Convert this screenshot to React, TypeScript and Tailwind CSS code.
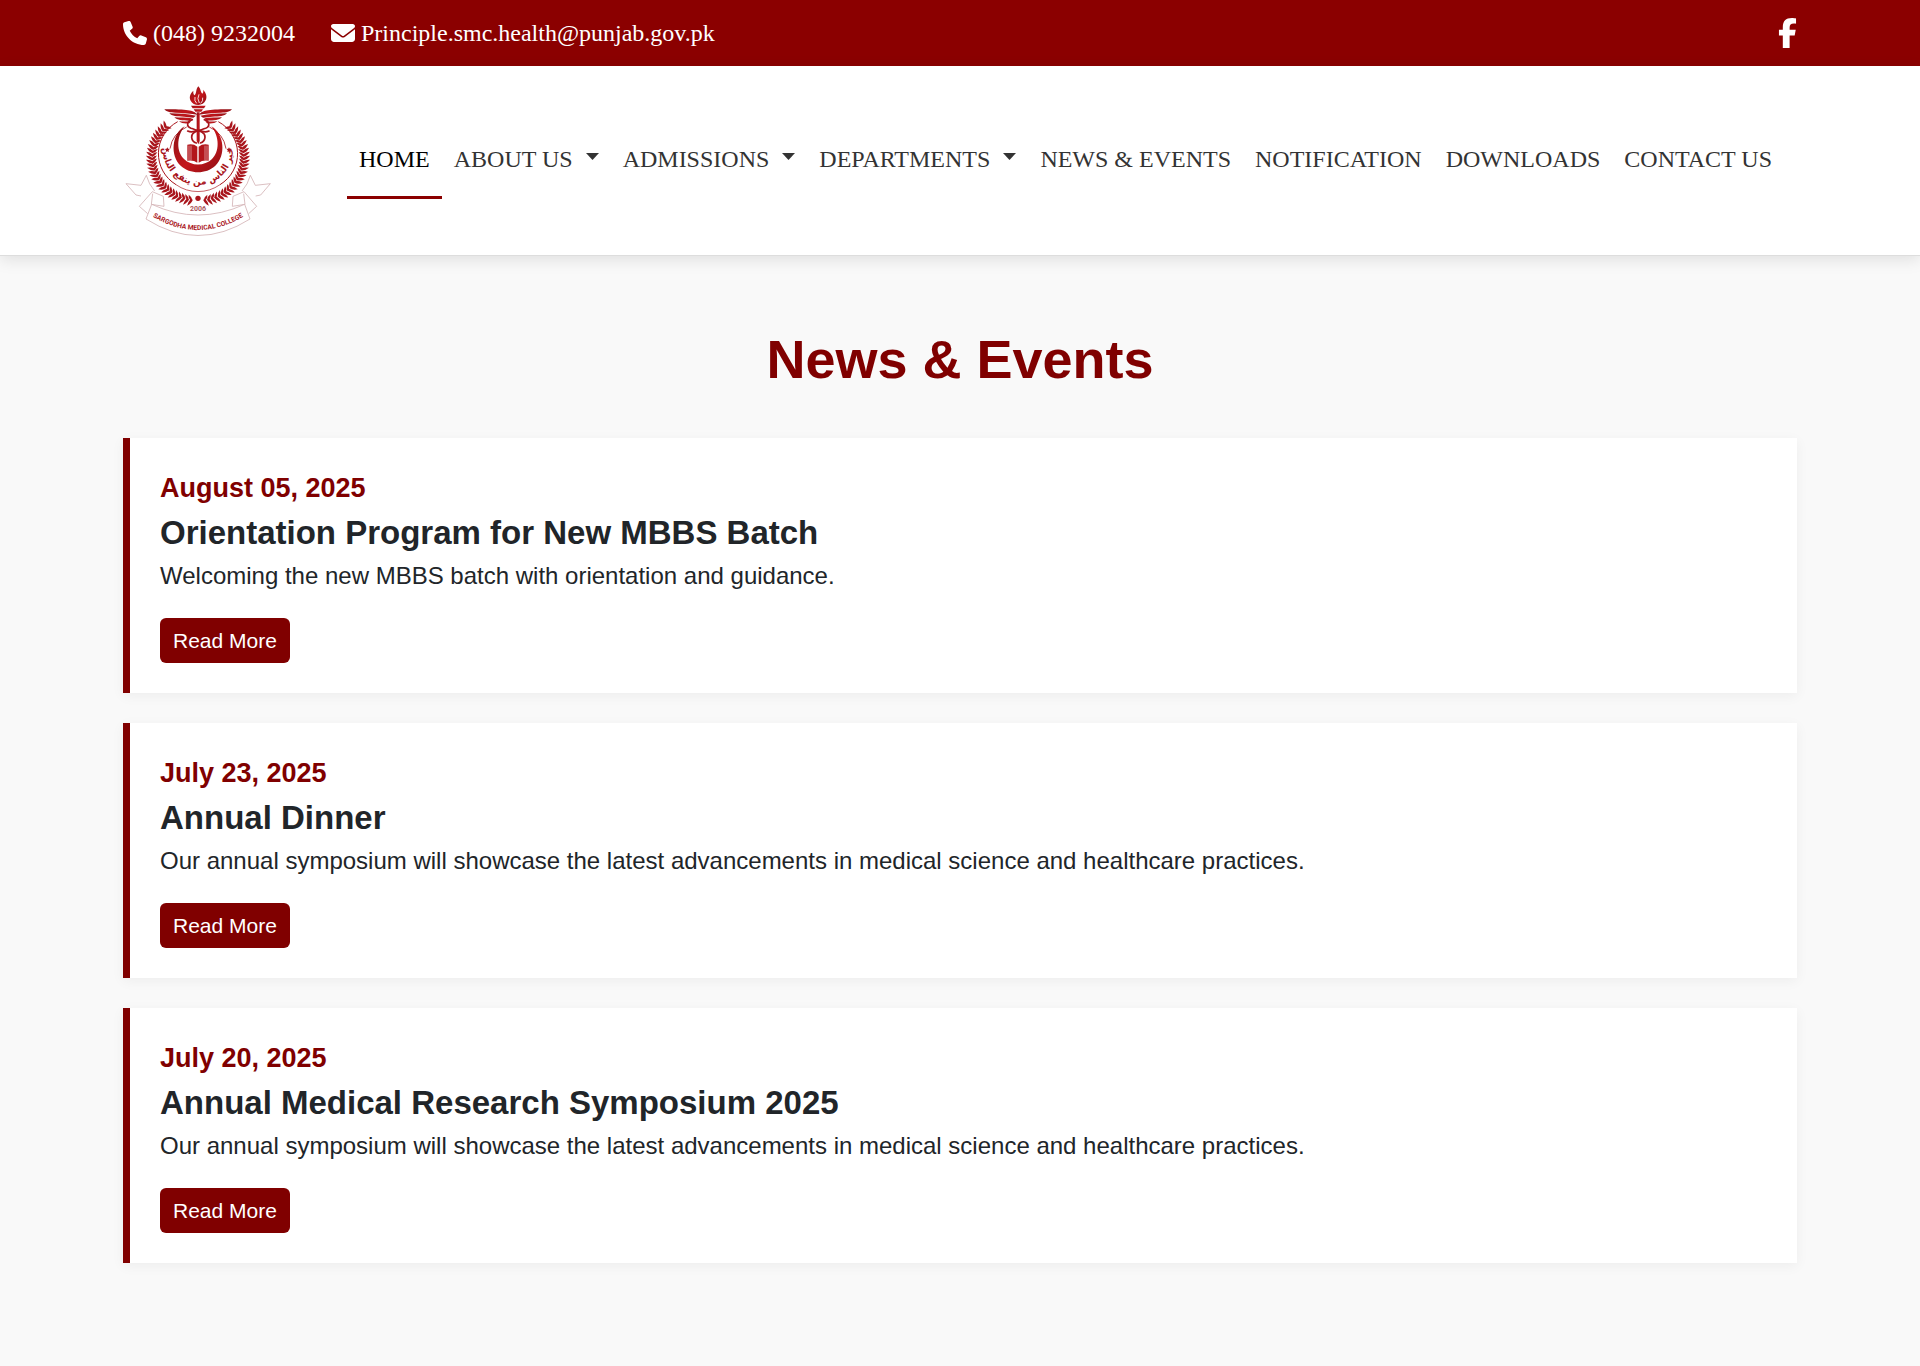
import { FaPhone, FaEnvelope, FaFacebookF } from "react-icons/fa6";

type NavItem = { label: string; active?: boolean; menu?: boolean };

const navItems: NavItem[] = [
  { label: "HOME", active: true },
  { label: "ABOUT US", menu: true },
  { label: "ADMISSIONS", menu: true },
  { label: "DEPARTMENTS", menu: true },
  { label: "NEWS & EVENTS" },
  { label: "NOTIFICATION" },
  { label: "DOWNLOADS" },
  { label: "CONTACT US" },
];

const news = [
  {
    date: "August 05, 2025",
    title: "Orientation Program for New MBBS Batch",
    text: "Welcoming the new MBBS batch with orientation and guidance.",
  },
  {
    date: "July 23, 2025",
    title: "Annual Dinner",
    text: "Our annual symposium will showcase the latest advancements in medical science and healthcare practices.",
  },
  {
    date: "July 20, 2025",
    title: "Annual Medical Research Symposium 2025",
    text: "Our annual symposium will showcase the latest advancements in medical science and healthcare practices.",
  },
];

/* Pairs of laurel leaves along a circular stem, from bottom to top. */
const leafAngles = Array.from({ length: 28 }, (_, i) => 98 + i * 4.7);

function LaurelHalf() {
  return (
    <g>
      {leafAngles.map((deg) => {
        const a = (deg * Math.PI) / 180;
        const x = 264 + 137 * Math.cos(a);
        const y = 262 + 128 * Math.sin(a);
        return (
          <g key={deg} transform={`translate(${x} ${y}) rotate(${deg})`}>
            <path d="M-1 -3 Q10 -2 19 11 Q8 11 -1 4Z" />
            <path d="M1 -3 Q-8 -1 -14 11 Q-5 11 1 4Z" />
          </g>
        );
      })}
    </g>
  );
}

function Wing() {
  return (
    <g>
      <path d="M262 133 C250 119 232 117 163 117 C168 124 180 127 196 127 C222 127 244 130 262 133Z" />
      <path d="M178 129 C186 137 200 139 222 139 L250 142 L258 136 C232 130 208 130 178 129Z" />
      <path d="M193 141 C202 150 216 151 238 151 L246 144 C226 142 210 142 193 141Z" />
      <path d="M207 153 C215 160 226 160 238 159 L243 153 C230 154 218 154 207 153Z" />
    </g>
  );
}

function CollegeLogo() {
  return (
    <svg
      viewBox="39 26 450 489"
      className="h-[163px] w-[150px] shrink-0"
      role="img"
      aria-label="Sargodha Medical College"
    >
      <defs>
        <linearGradient id="crimson" x1="0" y1="0" x2="1" y2="1">
          <stop offset="0" stopColor="#8c1015" />
          <stop offset="0.55" stopColor="#c4161c" />
          <stop offset="1" stopColor="#8c1015" />
        </linearGradient>
        <path id="mottoArc" d="M162 215 A105 104 0 1 0 366 215" />
        <path id="nameArc" d="M118 433 Q264 525 410 433" />
      </defs>

      <g fill="#a9151c">
        <LaurelHalf />
        <g transform="matrix(-1 0 0 1 528 0)">
          <LaurelHalf />
        </g>
        <circle cx="264" cy="384" r="8" />
      </g>

      <g fill="none" stroke="#a9151c" strokeWidth="3">
        <path d="M203 154 A113 110 0 0 0 198 343" />
        <path d="M325 154 A113 110 0 0 1 330 343" />
        <path d="M198 343 A113 110 0 0 0 330 343" strokeWidth="2" />
        <path d="M230 170 A88 86 0 0 0 180 235" strokeWidth="2.5" />
        <path d="M298 170 A88 86 0 0 1 348 235" strokeWidth="2.5" />
      </g>

      <path
        d="M224 168 C184 190 180 258 212 286 C240 312 288 312 316 286 C348 258 344 190 304 168 C330 200 328 246 306 266 C284 288 244 288 222 266 C200 246 198 200 224 168Z"
        fill="url(#crimson)"
      />

      <g fill="#b3161c">
        <path d="M232 223 Q250 219 262 229 V277 Q250 268 232 271Z" />
        <path d="M296 223 Q278 219 266 229 V277 Q278 268 296 271Z" />
      </g>
      <path
        d="M237 226 V270 M243 226 V270 M291 226 V270 M285 226 V270"
        stroke="#fff"
        strokeWidth="1.5"
      />

      <g fill="url(#crimson)">
        <path d="M265 48 C274 58 271 66 277 70 C281 66 280 61 279 58 C289 68 292 80 287 90 C283 99 275 104 265 104 C255 104 246 99 242 91 C236 79 242 68 250 61 C249 68 251 73 254 75 C261 68 256 58 265 48Z" />
        <path d="M243 106 H287 L282 114 H248Z" />
        <path d="M251 117 H279 L274 124 H256Z" />
        <path d="M260 126 H269 V212 L265 222 L260 212Z" />
        <Wing />
        <g transform="matrix(-1 0 0 1 529 0)">
          <Wing />
        </g>
      </g>
      <path
        d="M255 80 Q252 92 260 99 M267 72 Q260 84 268 98 M278 82 Q280 92 272 99"
        fill="none"
        stroke="#fff"
        strokeWidth="2.5"
      />

      <g fill="none" stroke="#a9151c" strokeWidth="5" strokeLinecap="round">
        <path d="M247 148 C230 153 228 168 243 174 C262 181 286 183 285 201 C284 211 277 216 271 218" />
        <path d="M283 148 C299 153 301 168 287 174 C268 181 244 183 245 201 C246 211 252 216 259 218" />
        <path d="M233 182 Q246 188 262 180" />
        <path d="M297 182 Q284 188 268 180" />
      </g>

      <g fill="#a9151c">
        <path d="M172 231 l2.400 4.500 5 .7 -3.600 3.500 .9 5 -4.700 -2.300 -4.700 2.300 .9 -5 -3.600 -3.500 5 -.7z" />
        <path d="M357 231 l2.400 4.500 5 .7 -3.600 3.500 .9 5 -4.700 -2.300 -4.700 2.300 .9 -5 -3.600 -3.500 5 -.7z" />
      </g>

      <text
        fill="#a9151c"
        fontSize="27"
        fontWeight="700"
        textAnchor="middle"
        className="font-['DejaVu_Sans',sans-serif]"
      >
        <textPath href="#mottoArc" startOffset="50%">
          خير الناس من ينفع الناس
        </textPath>
      </text>

      <g fill="#fff" stroke="#c9a0a3" strokeWidth="2" strokeLinejoin="round">
        <path
          d="M109 315 L93 345 L48 340 L78 374 L93 377 M109 315 Q116 342 134 362"
          fill="none"
        />
        <path
          d="M421 315 L436 345 L481 340 L452 374 L437 377 M421 315 Q414 342 396 362"
          fill="none"
        />
        <path d="M88 408 L127 364 L160 378 L162 408 L124 402 L128 370 M88 408 L113 430" fill="none" />
        <path d="M440 408 L402 364 L369 378 L367 408 L405 402 L401 370 M440 408 L416 430" fill="none" />
        <path d="M125 402 Q264 466 404 402 L420 446 Q264 545 108 446Z" />
      </g>

      <text
        x="264"
        y="423"
        fontSize="21"
        fontWeight="700"
        textAnchor="middle"
        fill="#a9555a"
        className="font-['Roboto',sans-serif]"
      >
        2006
      </text>
      <text
        fill="#a9151c"
        fontSize="20"
        fontWeight="700"
        textAnchor="middle"
        className="font-['Roboto',sans-serif]"
      >
        <textPath href="#nameArc" startOffset="50%">
          SARGODHA MEDICAL COLLEGE
        </textPath>
      </text>
    </svg>
  );
}

function Caret() {
  return (
    <svg viewBox="0 0 13 7" className="mb-1 ml-[13px] h-[7px] w-[13px]" fill="currentColor" aria-hidden="true">
      <path d="M0 0H13L6.500 7Z" />
    </svg>
  );
}

export default function App() {
  return (
    <div className="min-h-screen bg-[#f9f9f9] font-['Liberation_Sans',Arial,sans-serif] text-[#212529]">
      <div className="flex h-[66px] items-center bg-[#8b0000] px-[123px] font-['Liberation_Serif',serif] text-2xl text-white">
        <a href="tel:0489232004" className="flex items-center gap-1.5">
          <FaPhone className="size-6" />
          (048) 9232004
        </a>
        <a
          href="mailto:Principle.smc.health@punjab.gov.pk"
          className="ml-9 flex items-center gap-1.5"
        >
          <FaEnvelope className="size-6" />
          Principle.smc.health@punjab.gov.pk
        </a>
        <a href="#facebook" aria-label="Facebook" className="ml-auto">
          <FaFacebookF className="h-[30px] w-[19px]" />
        </a>
      </div>

      <header className="relative flex items-center justify-between border-b border-[#dddddd] bg-white py-[13px] pr-[136px] pl-[123px] shadow-[0_4px_15px_rgba(0,0,0,0.1)]">
        <a href="#home">
          <CollegeLogo />
        </a>
        <nav>
          <ul className="flex font-['Liberation_Serif',serif] text-2xl/9 whitespace-nowrap">
            {navItems.map((item) => (
              <li key={item.label}>
                <a
                  href="#"
                  className={
                    item.active
                      ? "flex items-center border-b-3 border-[#8b0000] px-3 pt-[18px] pb-[19px] text-black"
                      : "flex items-center border-b-3 border-transparent px-3 pt-[18px] pb-[19px] text-[#333333]"
                  }
                >
                  {item.label}
                  {item.menu && <Caret />}
                </a>
              </li>
            ))}
          </ul>
        </nav>
      </header>

      <main className="px-[123px] pt-[71px] pb-[102px]">
        <h1 className="mb-[46px] text-center text-[54px]/[65px] font-bold text-[#800000]">
          News &amp; Events
        </h1>
        <div className="flex flex-col gap-[30px]">
          {news.map((item) => (
            <article
              key={item.date}
              className="border-l-7 border-[#800000] bg-white p-[30px] shadow-[0_3px_12px_rgba(0,0,0,0.05)]"
            >
              <p className="text-[27px]/10 font-bold text-[#800000]">{item.date}</p>
              <h2 className="my-[5px] text-[33px]/10 font-bold">{item.title}</h2>
              <p className="text-2xl/9">{item.text}</p>
              <a
                href="#"
                className="mt-6 inline-flex h-[45px] items-center rounded-md bg-[#800000] px-[13px] text-[21px] text-white"
              >
                Read More
              </a>
            </article>
          ))}
        </div>
      </main>
    </div>
  );
}
